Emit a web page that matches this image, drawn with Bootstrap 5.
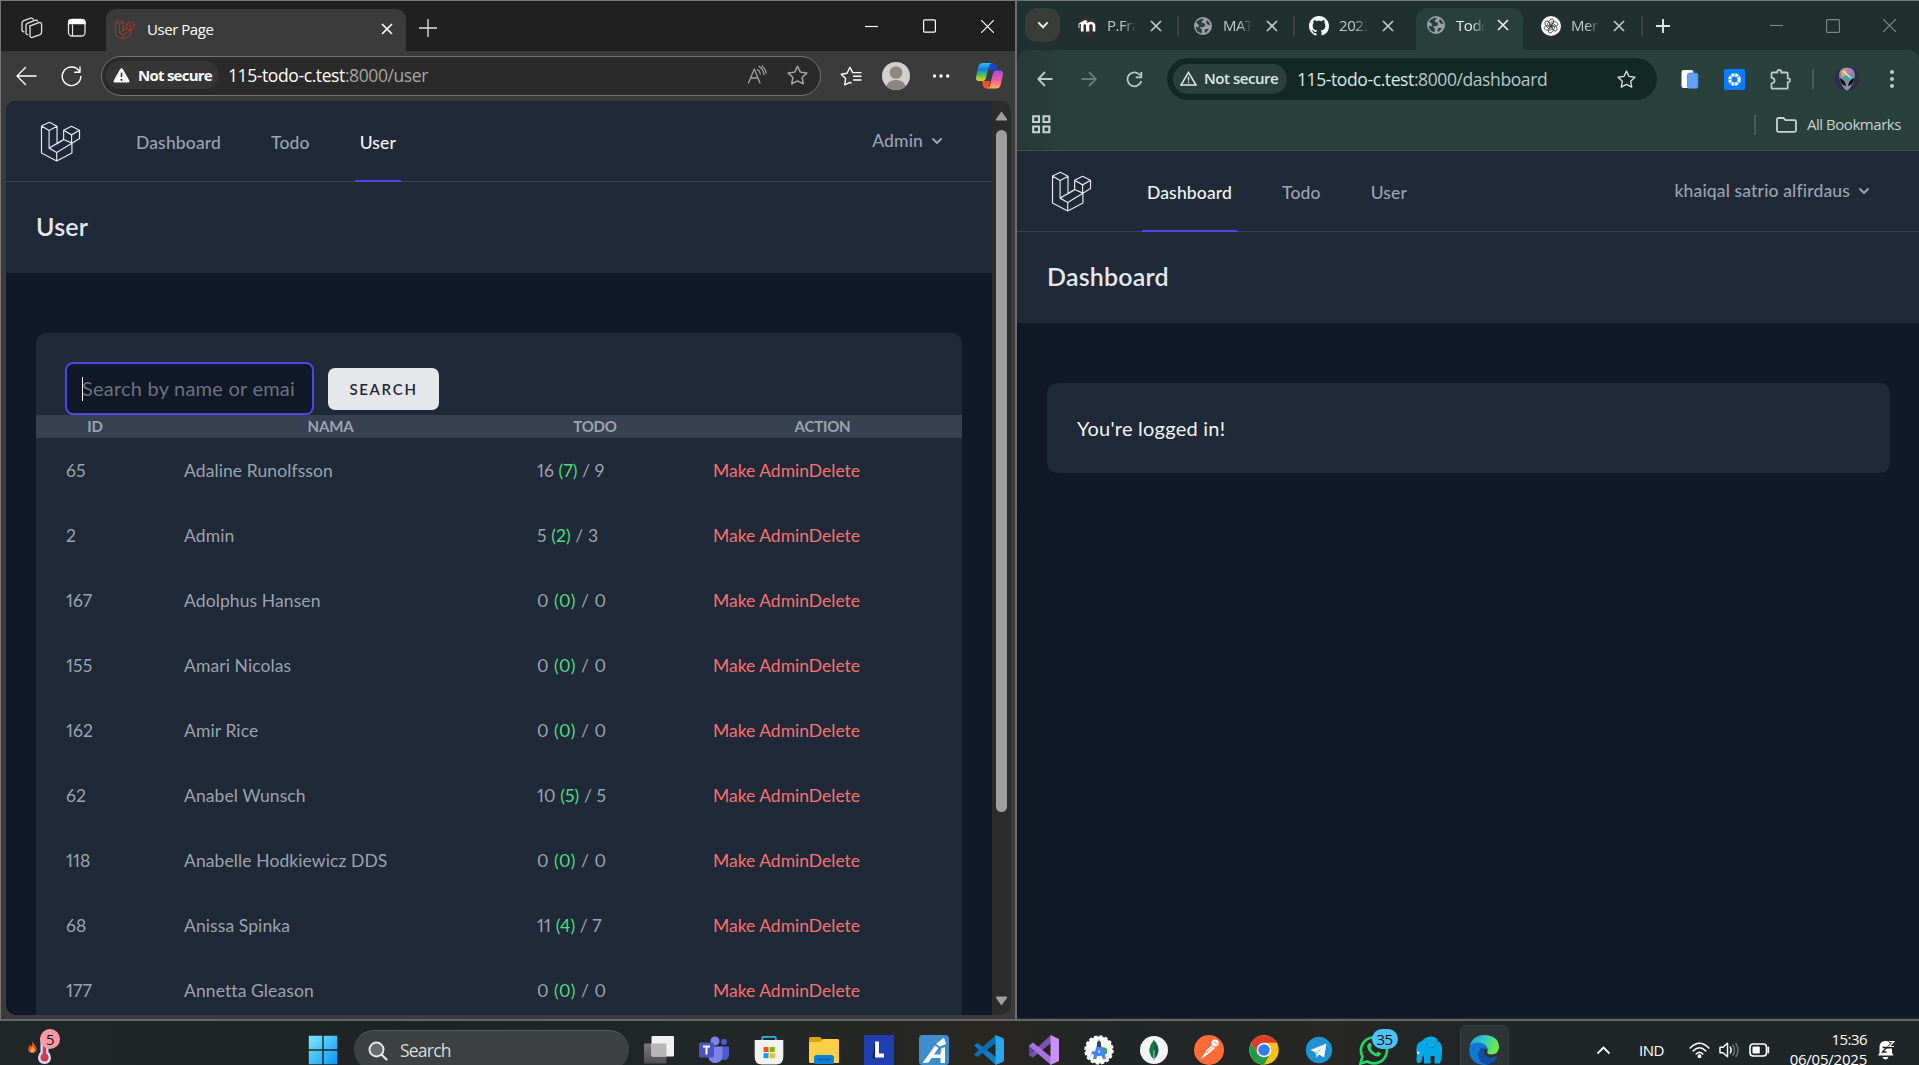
<!DOCTYPE html>
<html lang="en" data-bs-theme="dark">
<head>
<meta charset="utf-8">
<meta name="viewport" content="width=device-width, initial-scale=1">
<title>Desktop - User Page and Dashboard</title>
<link href="https://cdn.jsdelivr.net/npm/bootstrap@5.3.0/dist/css/bootstrap.min.css" rel="stylesheet">
<style>
  body { width: 1919px; height: 1065px; overflow: hidden; background: #202527; font-family: "Open Sans", "Noto Sans", sans-serif; font-size: 15px; letter-spacing: -.03em; line-height: 1.5; color: #fff; }
  svg { display: block; flex: none; }
  .desk { height: 1021px; }
  .ln { fill: none; stroke: currentColor; stroke-linecap: round; stroke-linejoin: round; }
  .slot { display: flex; align-items: center; justify-content: center; flex: none; }

  /* left window */
  .edge-win { width: 1017px; border: 1px solid #767676; border-right: 2px solid #6e6e6e; border-bottom: 2px solid #666; background: #3b3b3b; }
  .edge-tabs { height: 50px; background: #202020; }
  .edge-tab { width: 300px; height: 42px; background: #3b3b3b; border-radius: 10px 10px 0 0; margin-left: 19px; padding: 0 0 2px 9px; }
  .edge-bar { height: 50px; }
  .edge-url { width: 720px; height: 40px; border: 1px solid #747474; border-radius: 20px; background: #2a2a2a; margin-left: 19px; padding: 0 0 2px 4px; }
  .edge-chip { width: 113px; height: 28px; border-radius: 14px; background: #353535; padding-left: 7px; font-weight: 700; letter-spacing: -.05em; }
  .addr { font-size: 17.5px; letter-spacing: -.023em; }
  .edge-view { margin: 0 4px 4px 5px; height: 914px; border-radius: 10px; overflow: hidden; background: #2c2c2c; }
  .avatar-ring { width: 28px; height: 28px; border-radius: 50%; background: #d2d0ce; overflow: hidden; }
  .scroll-rail { width: 19px; padding: 10px 0 9px; }
  .scroll-thumb { width: 11px; height: 682px; border-radius: 6px; background: #9f9f9f; margin-top: 9px; }

  /* application */
  .app { font-family: Lato, sans-serif; letter-spacing: 0; background: #111827; overflow: hidden; }
  .app-nav { height: 81px; background: #1f2937; border-bottom: 1px solid #374151; padding: 0 45px 0 34px; font-size: 17.5px; font-weight: 500; color: #9ca3af; letter-spacing: .15px; }
  .app-links { gap: 40px; margin-left: 50px; margin-bottom: -1px; }
  .app-link { display: flex; align-items: center; padding: 4px 5px 0; border-bottom: 2px solid transparent; line-height: 25px; }
  .app-link.on { color: #f3f4f6; border-color: #4f46e5; }
  .app-head { height: 91px; background: #1f2937; padding: 0 0 1px 30px; font-size: 25px; font-weight: 600; color: #e5e7eb; letter-spacing: .2px; }
  .panel-box { background: #1f2937; border-radius: 10px; margin: 60px 30px 0; }
  .find { padding: 29px 0 0 29px; gap: 14px; height: 82px; }
  .find-input { width: 249px; height: 53px; border: 2px solid #4f46e5; border-radius: 8px; background: #111827; padding: 0 18px 2px 15px; font-size: 20px; letter-spacing: .22px; color: #d1d5db; outline: 0; }
  .find-input::placeholder { color: #6b7280; opacity: 1; }
  .caret-bar { position: absolute; left: 17px; top: 15px; width: 1px; height: 24px; background: #fff; }
  .find-btn { width: 111px; height: 42px; margin-top: 6px; border: 0; border-radius: 7px; background: #e5e7eb; color: #1f2937; font-size: 15px; font-weight: 600; letter-spacing: 1.7px; padding: 0; }
  .users { width: 926px; table-layout: fixed; color: #9ca3af; font-size: 17.5px; font-weight: 400; letter-spacing: .1px; font-variant-numeric: proportional-nums; }
  .users th { height: 23px; line-height: 23px; background: #374151; text-align: center; font-size: 15px; font-weight: 700; letter-spacing: -.2px; padding: 0; }
  .users td { height: 65px; padding: 0 0 0 30px; line-height: 25px; }
  .users .zeros { letter-spacing: .5px; }
  .users .acts { color: #f87171; letter-spacing: 0; }
  .done { color: #4ade80; }

  /* right window */
  .chrome-win { width: 902px; border-top: 1px solid #767676; border-bottom: 2px solid #666; background: #1f302e; font-size: 15px; }
  .chrome-tabs { height: 49px; padding-left: 8px; padding-top: 7px; color: #b9cdc8; }
  .tab-menu { width: 35px; height: 34px; border-radius: 12px; background: #383d3a; }
  .ctab { width: 116px; height: 35px; padding-left: 14px; flex: none; }
  .ctab.on { width: 107px; height: 42px; padding: 0 0 8px 10px; margin-left: 5px; margin-right: 4px; background: #29403c; border-radius: 12px 12px 0 0; color: #e6efec; }
  .ctab-name { width: 29px; margin-left: 10px; overflow: hidden; white-space: nowrap; -webkit-mask-image: linear-gradient(90deg, #000 55%, transparent); mask-image: linear-gradient(90deg, #000 55%, transparent); }
  .tab-sep { width: 2px; height: 20px; background: #3d4441; flex: none; }
  .chrome-bar { height: 100px; background: linear-gradient(90deg, #263936, #29403c 50px); border-radius: 10px 10px 0 0; color: #b9cdc8; }
  .omni { width: 490px; height: 42px; border-radius: 21px; background: #122825; margin-left: 24px; padding-left: 6px; }
  .omni-chip { width: 114px; height: 30px; border-radius: 15px; background: #29403c; padding: 0 0 2px 7px; font-weight: 600; color: #dbe9e5; }
  .chrome-view { height: 868px; border-top: 1px solid #3f504b; }
  .shade { background: linear-gradient(90deg, #101725, #111827 45px); }

  /* taskbar */
  .taskbar { height: 44px; overflow: hidden; background: linear-gradient(90deg, #212627 0, #1e2426 420px, #222726 760px, #292722 990px, #202527 1130px, #272724 1330px, #202527 1480px, #202527 100%); }
  .task-row { height: 58px; }
  .find-pill { width: 275px; height: 40px; border-radius: 20px; background: #3d4142; border-top: 1px solid #585c5d; padding-left: 14px; font-size: 17.5px; color: #d9dbdb; margin-left: 17px; }
  .app-slot { width: 55px; height: 58px; }
  .app-slot.on { width: 49px; margin: 4px 3px 0; height: 54px; align-items: flex-start; padding-top: 9px; background: #2e3435; border: 1px solid #363c3d; border-radius: 6px 6px 0 0; }
  .note { position: absolute; display: flex; align-items: center; justify-content: center; height: 20px; border-radius: 10px; color: #111; font-size: 15px; letter-spacing: -.04em; }
</style>
<script src="https://cdn.jsdelivr.net/npm/bootstrap@5.3.0/dist/js/bootstrap.bundle.min.js"></script>
</head>
<body>

<svg width="0" height="0" class="position-absolute">
  <defs>
    <symbol id="laravel" viewBox="120 362 123 124"><path d="M124 377 148 366 171 378V431L191 419V390L215 378 239 390V415L216 429V459L170 483 124 459ZM124 377 147 391 171 378M147 391V444L191 418 216 429 170 457 147 444M170 457V483M191 390 215 404 239 390M215 404V429" fill="none" stroke="currentColor" stroke-width="3.6" stroke-linejoin="round"/></symbol>
    <symbol id="x" viewBox="0 0 12 12"><path d="M1 1 11 11M11 1 1 11" fill="none" stroke="currentColor" stroke-width="1.7"/></symbol>
    <symbol id="chev" viewBox="0 0 20 20"><path fill="currentColor" fill-rule="evenodd" d="M5.293 7.293a1 1 0 011.414 0L10 10.586l3.293-3.293a1 1 0 111.414 1.414l-4 4a1 1 0 01-1.414 0l-4-4a1 1 0 010-1.414z"/></symbol>
    <symbol id="star" viewBox="0 0 20 20"><path d="M10 1.2 12.7 6.8 18.9 7.6 14.4 11.9 15.5 18 10 15.1 4.5 18 5.6 11.9 1.1 7.6 7.3 6.8Z" fill="none" stroke="currentColor" stroke-width="1.4" stroke-linejoin="round"/></symbol>
    <symbol id="globe" viewBox="0 0 20 20"><circle cx="10" cy="10" r="9" fill="#9aa0a6"/><path d="M3 6.5C5 3.8 8 2.6 11 2.9L8.8 5.2 9 7 11.2 7.2 12.5 9.3 10.2 11.3H6.5L9 13.7 8.6 17.3C5.3 16.6 3 14.4 2.6 11L5.5 11.2 6 9ZM14 4.2C15.900 5.500 17.100 7.400 17.300 9.300L14.500 8.500 13 6.300ZM12.500 13H15.800C14.900 14.800 13.600 16.200 12 16.900L11.400 15Z" fill="#29403c"/></symbol>
  </defs>
</svg>

<div class="desk d-flex">

  <!-- Edge window -->
  <section class="edge-win d-flex flex-column">
    <div class="edge-tabs d-flex align-items-end">
      <div class="slot" style="height:46px"><svg width="22" height="22" viewBox="0 0 22 22" class="ln" stroke-width="1.3" style="margin-left:20px;color:#e4e4e4"><path d="M8.6 9.2 17.7 5.6Q20.6 5 20.6 7.6V15.4Q20.4 17 19 17.6L11.5 20.4Q9.3 21 9 18.8V10.7ZM6.800 17.600Q5 17.700 5 15.700V8.500Q5 7 6.300 6.400L14.500 3.200Q16 2.800 16.600 4M3 14.800Q1 14.700 1 12.700V5.900Q1 4.500 2.300 3.900L9.500 1.200Q11.400.800 12.200 2.200"/></svg>
      <svg width="20" height="20" viewBox="0 0 20 20" style="margin-left:24px"><rect x="1.5" y="1.5" width="16.5" height="16.5" rx="3.5" fill="none" stroke="#e6e6e6" stroke-width="1.3"/><path d="M1 6.3V4Q1 1 4 1H15.6Q18.6 1 18.6 4V6.3Z" fill="#fff"/><path d="M5.5 6.5V18" stroke="#e6e6e6" stroke-width="1.2"/></svg></div>
      <div class="edge-tab d-flex align-items-center">
        <svg width="20" height="21" style="color:#e0352b"><use href="#laravel"/></svg>
        <span style="margin-left:12px">User Page</span>
        <svg width="12" height="12" class="ms-auto" style="margin-right:13px"><use href="#x"/></svg>
      </div>
      <div class="slot" style="height:46px;margin-left:13px"><svg width="18" height="18" viewBox="0 0 18 18"><path d="M9 0V18M0 9H18" stroke="#e4e4e4" stroke-width="1.3"/></svg></div>
      <div class="d-flex align-items-center ms-auto" style="height:50px;gap:45px;padding-right:21px">
        <svg width="13" height="13"><path d="M0 6.5H13" stroke="#fff" stroke-width="1.2"/></svg>
        <svg width="13" height="14"><rect x=".6" y=".8" width="11.8" height="12.3" rx="1" fill="none" stroke="#fff" stroke-width="1.2"/></svg>
        <svg width="13" height="13" viewBox="0 0 13 13"><path d="M0 0 13 13M13 0 0 13" stroke="#fff" stroke-width="1.2"/></svg>
      </div>
    </div>
    <div class="edge-bar d-flex align-items-center">
      <svg width="21" height="20" viewBox="0 0 21 20" class="ln" stroke-width="1.4" style="margin-left:15px"><path d="M20 10H1M9.5 1.5 1 10 9.5 18.5"/></svg>
      <svg width="21" height="21" viewBox="0 0 21 21" class="ln" stroke-width="1.4" style="margin-left:24px"><path d="M18.3 5.2A9.3 9.3 0 1 0 19.8 10.5M19 1V6.2H13.7"/></svg>
      <div class="edge-url d-flex align-items-center">
        <span class="edge-chip d-flex align-items-center"><svg width="17" height="15" viewBox="0 0 17 15" class="me-2"><path d="M7.2 1Q8.5-.6 9.8 1L16.3 12.6Q16.9 14.5 15 14.6H2Q.1 14.5.7 12.6Z" fill="#fff"/><path d="M8.5 4.7V9" stroke="#333" stroke-width="1.6"/><circle cx="8.5" cy="11.8" r="1.1" fill="#333"/></svg>Not secure</span>
        <span class="addr" style="margin-left:9px">115-todo-c.test<span style="color:#a5a5a5">:8000/user</span></span>
        <svg width="21" height="20" viewBox="0 0 21 20" class="ln ms-auto" stroke-width="1.3" style="color:#a0a0a0"><path d="M1.5 18 7.3 4 13 18M3.5 13H11M10.5 4.6Q13 6 13.3 9M12 1.400Q16.600 4 17 9.500M15 1Q18.500 4 19.300 8" /></svg>
        <svg width="21" height="21" style="margin:0 12px 0 19px;color:#a8a8a8"><use href="#star"/></svg>
      </div>
      <svg width="22" height="20" viewBox="0 0 22 20" class="ln" stroke-width="1.4" style="margin-left:19px"><path d="M11 17 9.8 16.4 4.8 18.9 5.6 12.6 1.2 8.3 7 7.2 10 1.3 12.6 6.4M12.8 6.6H21M13.5 10.3H21M13.5 14H21"/></svg>
      <span class="avatar-ring" style="margin-left:20px"><svg width="28" height="28"><circle cx="14" cy="10.5" r="6.3" fill="#8b8783"/><ellipse cx="14" cy="26" rx="10" ry="8" fill="#8b8783"/></svg></span>
      <svg width="18" height="6" style="margin-left:22px"><g fill="#fff"><circle cx="2.5" cy="3" r="1.7"/><circle cx="9" cy="3" r="1.7"/><circle cx="15.7" cy="3" r="1.7"/></g></svg>
      <svg width="29" height="28" viewBox="0 0 29 28" style="margin-left:25px">
        <defs><linearGradient id="cpa" x1="0" y1="0" x2="0" y2="1"><stop offset="0" stop-color="#2bc2f5"/><stop offset=".35" stop-color="#1b78e0"/><stop offset=".65" stop-color="#3fbf6d"/><stop offset="1" stop-color="#f6d50d"/></linearGradient><linearGradient id="cpb" x1="0" y1="0" x2="0" y2="1"><stop offset="0" stop-color="#9a4ff0"/><stop offset=".5" stop-color="#f2569a"/><stop offset="1" stop-color="#ffb45e"/></linearGradient></defs>
        <path d="M14 1H18.5Q20.6 1 21.4 3.6L22.6 8H14Z" fill="#1c46c9"/><path d="M7 19H15L13.6 26.6H11Q8.6 26.4 8 24Z" fill="#f4542b"/>
        <path d="M7.5 1H16.6Q14.8 1.6 14 4.6L10.8 16.4Q10 19 7.4 19H3.6Q.3 18.6 1 15L3.4 4.6Q4.6 1 7.5 1Z" fill="url(#cpa)"/>
        <path d="M21.2 8.6H25.4Q28.7 9 28 12.5L25.6 23Q24.4 26.6 21.5 26.6H12.4Q14.4 26 15 23L18 11.4Q18.8 8.6 21.2 8.6Z" fill="url(#cpb)"/>
      </svg>
    </div>
    <div class="edge-view d-flex">
      <main class="app flex-grow-1">
        <nav class="app-nav d-flex">
          <svg width="41" height="41" class="align-self-center" style="color:#e5e7eb"><use href="#laravel"/></svg>
          <div class="app-links d-flex">
            <span class="app-link">Dashboard</span><span class="app-link">Todo</span><span class="app-link on">User</span>
          </div>
          <div class="d-flex align-items-center ms-auto gap-1"><span>Admin</span><svg width="20" height="20"><use href="#chev"/></svg></div>
        </nav>
        <header class="app-head d-flex align-items-center">User</header>
        <div class="panel-box">
          <form class="find d-flex">
            <div class="position-relative"><input class="find-input" type="text" placeholder="Search by name or email"><span class="caret-bar"></span></div>
            <button class="find-btn" type="button">SEARCH</button>
          </form>
          <table class="users">
            <colgroup><col style="width:118px"><col style="width:353px"><col style="width:176px"><col style="width:279px"></colgroup>
            <thead><tr><th>ID</th><th>NAMA</th><th>TODO</th><th>ACTION</th></tr></thead>
            <tbody>
              <tr><td>65</td><td>Adaline Runolfsson</td><td>16 <span class="done">(7)</span> / 9</td><td class="acts">Make AdminDelete</td></tr>
              <tr><td>2</td><td>Admin</td><td>5 <span class="done">(2)</span> / 3</td><td class="acts">Make AdminDelete</td></tr>
              <tr><td>167</td><td>Adolphus Hansen</td><td class="zeros">0 <span class="done">(0)</span> / 0</td><td class="acts">Make AdminDelete</td></tr>
              <tr><td>155</td><td>Amari Nicolas</td><td class="zeros">0 <span class="done">(0)</span> / 0</td><td class="acts">Make AdminDelete</td></tr>
              <tr><td>162</td><td>Amir Rice</td><td class="zeros">0 <span class="done">(0)</span> / 0</td><td class="acts">Make AdminDelete</td></tr>
              <tr><td>62</td><td>Anabel Wunsch</td><td>10 <span class="done">(5)</span> / 5</td><td class="acts">Make AdminDelete</td></tr>
              <tr><td>118</td><td>Anabelle Hodkiewicz DDS</td><td class="zeros">0 <span class="done">(0)</span> / 0</td><td class="acts">Make AdminDelete</td></tr>
              <tr><td>68</td><td>Anissa Spinka</td><td>11 <span class="done">(4)</span> / 7</td><td class="acts">Make AdminDelete</td></tr>
              <tr><td>177</td><td>Annetta Gleason</td><td class="zeros">0 <span class="done">(0)</span> / 0</td><td class="acts">Make AdminDelete</td></tr>
            </tbody>
          </table>
        </div>
      </main>
      <div class="scroll-rail d-flex flex-column align-items-center">
        <svg width="13" height="10"><path d="M6.5.5 12 8Q12.6 9.6 11 9.6H2Q.4 9.6 1 8Z" fill="#9f9f9f"/></svg>
        <div class="scroll-thumb"></div>
        <svg width="13" height="10" class="mt-auto"><path d="M6.5 9.5 12 2Q12.6.4 11 .4H2Q.4.4 1 2Z" fill="#9f9f9f"/></svg>
      </div>
    </div>
  </section>

  <!-- Chrome window -->
  <section class="chrome-win d-flex flex-column">
    <div class="chrome-tabs d-flex align-items-start">
      <span class="tab-menu slot"><svg width="12" height="8" viewBox="0 0 12 8"><path d="M1.3 1.4 6 6.2 10.7 1.4" fill="none" stroke="#e6efec" stroke-width="2"/></svg></span>
      <div class="ctab d-flex align-items-center" style="margin-left:3px">
        <svg width="20" height="20"><circle cx="10" cy="10" r="9.5" fill="#332e30"/><path d="M5.2 15.5V9.5Q5.2 7 7.6 7T10.3 9.5V15.5M11 15.5V9.5Q11 7 13.8 7T17 9.5V15.5" fill="none" stroke="#fff" stroke-width="2.6"/><path d="M1.5 7.5 8 4 11 5.2 5 8.2Z" fill="#fff"/><path d="M2 7.5V12" stroke="#ddd"/></svg>
        <span class="ctab-name">P.Fra</span><svg width="12" height="12" style="margin-left:14px"><use href="#x"/></svg>
        <span class="tab-sep ms-auto"></span>
      </div>
      <div class="ctab d-flex align-items-center">
        <svg width="20" height="20"><use href="#globe"/></svg>
        <span class="ctab-name">MAT</span><svg width="12" height="12" style="margin-left:14px"><use href="#x"/></svg>
        <span class="tab-sep ms-auto"></span>
      </div>
      <div class="ctab d-flex align-items-center">
        <svg width="20" height="20" viewBox="0 0 16 16"><path fill="#fff" d="M8 0C3.58 0 0 3.58 0 8c0 3.54 2.29 6.53 5.47 7.59.4.07.55-.17.55-.38 0-.19-.01-.82-.01-1.49-2.01.37-2.53-.49-2.69-.94-.09-.23-.48-.94-.82-1.13-.28-.15-.68-.52-.01-.53.63-.01 1.08.58 1.23.82.72 1.21 1.87.87 2.33.66.07-.52.28-.87.51-1.07-1.78-.2-3.64-.89-3.64-3.95 0-.87.31-1.59.82-2.15-.08-.2-.36-1.02.08-2.12 0 0 .67-.21 2.2.82.64-.18 1.32-.27 2-.27s1.36.09 2 .27c1.53-1.04 2.2-.82 2.2-.82.44 1.1.16 1.92.08 2.12.51.56.82 1.27.82 2.15 0 3.07-1.87 3.75-3.65 3.95.29.25.54.73.54 1.48 0 1.07-.01 1.93-.01 2.2 0 .21.15.46.55.38A8.01 8.01 0 0 0 16 8c0-4.42-3.58-8-8-8"/></svg>
        <span class="ctab-name">2022</span><svg width="12" height="12" style="margin-left:14px"><use href="#x"/></svg>
      </div>
      <div class="ctab on d-flex align-items-center">
        <svg width="20" height="20"><use href="#globe"/></svg>
        <span class="ctab-name">Todo</span><svg width="12" height="12" style="margin-left:12px"><use href="#x"/></svg>
      </div>
      <div class="ctab d-flex align-items-center">
        <svg width="20" height="20" viewBox="-10 -10 20 20"><circle r="10" fill="#fff"/><g fill="none" stroke="#333" stroke-width=".75"><ellipse cx="2.600" cy="-1.900" rx="4.200" ry="2.300"/><ellipse cx="2.600" cy="-1.900" rx="4.200" ry="2.300" transform="rotate(60)"/><ellipse cx="2.600" cy="-1.900" rx="4.200" ry="2.300" transform="rotate(120)"/><ellipse cx="2.600" cy="-1.900" rx="4.200" ry="2.300" transform="rotate(180)"/><ellipse cx="2.600" cy="-1.900" rx="4.200" ry="2.300" transform="rotate(240)"/><ellipse cx="2.600" cy="-1.900" rx="4.200" ry="2.300" transform="rotate(300)"/></g></svg>
        <span class="ctab-name">Mer</span><svg width="12" height="12" style="margin-left:13px"><use href="#x"/></svg>
        <span class="tab-sep ms-auto"></span>
      </div>
      <div class="d-flex align-items-center" style="height:35px;margin-left:13px"><svg width="14" height="14"><path d="M7 0V14M0 7H14" stroke="#dbe9e5" stroke-width="1.9"/></svg></div>
      <div class="d-flex align-items-center ms-auto" style="height:35px;gap:43px;padding-right:23px;color:#7f8987">
        <svg width="13" height="13"><path d="M0 6.5H13" stroke="currentColor" stroke-width="1.1"/></svg>
        <svg width="14" height="14"><rect x=".6" y=".6" width="12.8" height="12.8" rx="1" fill="none" stroke="currentColor" stroke-width="1.1"/></svg>
        <svg width="13" height="13" viewBox="0 0 13 13"><path d="M0 0 13 13M13 0 0 13" stroke="currentColor" stroke-width="1.2"/></svg>
      </div>
    </div>
    <div class="chrome-bar">
      <div class="d-flex align-items-center" style="height:58px">
        <svg width="16" height="16" viewBox="0 0 16 16" style="margin-left:20px"><path d="M15.5 8H1.5M8 1 1.2 8 8 15" fill="none" stroke="currentColor" stroke-width="1.8"/></svg>
        <svg width="16" height="16" viewBox="0 0 16 16" style="margin-left:28px;color:#657b76"><path d="M.5 8H14.5M8 1 14.8 8 8 15" fill="none" stroke="currentColor" stroke-width="1.8"/></svg>
        <svg width="17" height="17" viewBox="0 0 17 17" style="margin-left:29px"><path d="M14.2 4.2A7 7 0 1 0 15.3 10M15.3 1V6.3H9.8" fill="none" stroke="currentColor" stroke-width="1.8"/></svg>
        <div class="omni d-flex align-items-center">
          <span class="omni-chip d-flex align-items-center"><svg width="17" height="15" viewBox="0 0 17 15" style="margin-right:7px"><path d="M8.5 1.4 16 14.1H1Z" fill="none" stroke="currentColor" stroke-width="1.5"/><path d="M8.5 5.7V9.7M8.5 10.7V12.3" stroke="currentColor" stroke-width="1.4"/></svg>Not secure</span>
          <span class="addr" style="margin-left:10px;color:#dbe9e5">115-todo-c.test<span style="color:#b5cac5">:8000/dashboard</span></span>
          <svg width="19" height="19" class="ms-auto" style="margin-right:21px;color:#d5e3df"><use href="#star"/></svg>
        </div>
        <svg width="18" height="20" style="margin-left:24px"><rect x=".5" y="1" width="12" height="18" rx="2" fill="#fff"/><rect x="6.5" y="4" width="10.5" height="15.5" rx="2" fill="#62a0fb" stroke="#3f78d8" stroke-width=".7"/></svg>
        <svg width="21" height="21" viewBox="0 0 21 21" style="margin-left:25px"><rect width="21" height="21" rx="1.5" fill="#0a7cff"/><circle cx="10.5" cy="10.5" r="4.7" fill="none" stroke="#fff" stroke-width="3.3" stroke-dasharray="3 .7"/></svg>
        <svg width="21" height="21" viewBox="0 0 21 21" style="margin-left:25px"><path d="M2.5 3.5H7.2Q7 1 9.2 1T11.4 3.5H16.8Q17.7 3.5 17.7 4.5V9.3Q20 9.2 20 11.3T17.7 13.4V18.7Q17.7 19.7 16.8 19.7H2.5Q1.5 19.7 1.5 18.7V14.6Q4.6 14 4.6 11.6T1.5 8.6V4.5Q1.5 3.5 2.5 3.5Z" fill="none" stroke="#b9cdc8" stroke-width="1.8"/></svg>
        <span class="tab-sep" style="margin-left:21px;background:#465b57"></span>
        <svg width="26" height="26" viewBox="0 0 26 26" style="margin-left:20px"><circle cx="13" cy="13" r="12.300" fill="#2a3046"/><path d="M13 1.500C6.500 1.500 4.500 6 5.300 11.500 6 16.500 10.500 24.500 13 24.500S20 16.500 20.700 11.500C21.500 6 19.500 1.500 13 1.500Z" fill="#8f8ba6"/><path d="M7 5.500 12 2 14 8 8 12Z" fill="#c9ad6b"/><path d="M13 2 19 5 16 10 12.500 7Z" fill="#c874bd"/><path d="M8.500 11 20 7 17 13 13 17Z" fill="#3fa39f"/><path d="M9 5 17 12" stroke="#e7e3f2" stroke-width="1.200"/><path d="M5.500 12Q11.500 14 12 20 7 19.500 5.500 12ZM20.500 12Q14.500 14 14 20 19 19.500 20.500 12Z" fill="#0b0b12"/></svg>
        <svg width="6" height="20" style="margin-left:29px"><g fill="#b9cdc8"><circle cx="3" cy="3" r="2"/><circle cx="3" cy="10" r="2"/><circle cx="3" cy="17" r="2"/></g></svg>
      </div>
      <div class="d-flex align-items-center" style="height:34px;padding:0 18px 1px 15px;color:#c7d3cf">
        <svg width="19" height="19" viewBox="0 0 19 19"><path d="M1.2 1.2H7V7H1.2ZM11.5 1.2H17.3V7H11.5ZM1.2 11.5H7V17.3H1.2ZM11.5 11.5H17.3V17.3H11.5Z" fill="none" stroke="currentColor" stroke-width="2.1"/></svg>
        <span class="tab-sep ms-auto" style="background:#465b57"></span>
        <svg width="21" height="16" viewBox="0 0 21 16" style="margin:0 10px 0 20px"><path d="M2.5 1H7.5L9.5 3.2H18.5Q20 3.2 20 4.7V13.3Q20 14.8 18.5 14.8H2.5Q1 14.8 1 13.3V2.5Q1 1 2.5 1Z" fill="none" stroke="currentColor" stroke-width="1.8"/></svg>
        <span>All Bookmarks</span>
      </div>
    </div>
    <main class="app shade chrome-view">
      <nav class="app-nav d-flex">
        <svg width="41" height="41" class="align-self-center" style="color:#e5e7eb"><use href="#laravel"/></svg>
        <div class="app-links d-flex">
          <span class="app-link on">Dashboard</span><span class="app-link">Todo</span><span class="app-link">User</span>
        </div>
        <div class="d-flex align-items-center ms-auto gap-1"><span>khaiqal satrio alfirdaus</span><svg width="20" height="20"><use href="#chev"/></svg></div>
      </nav>
      <header class="app-head d-flex align-items-center">Dashboard</header>
      <div class="panel-box d-flex align-items-center" style="height:90px;padding:0 0 1px 30px;margin-right:29px;font-size:20px;letter-spacing:.24px;color:#f3f4f6">You're logged in!</div>
    </main>
  </section>
</div>

<!-- Taskbar -->
<footer class="taskbar">
  <div class="task-row d-flex align-items-center">
    <div class="position-relative" style="width:307px;height:58px;flex:none">
      <svg width="60" height="44" viewBox="0 0 60 44"><path d="M32.5 20C33 23 37 25 36.5 29Q36 32 32.3 32 28.5 32 28.2 28.5 28 26 30 24 30.5 25.5 31.3 25.3 32.8 23 32.5 20Z" fill="#e8502a"/><path d="M32.5 25.5Q35 28 34.5 30 34 31.5 32.3 31.5 30.4 31.3 30.5 29.5 31 28 32.5 25.5Z" fill="#ffb53b"/><path d="M40.5 18Q40.5 14 44.5 14T48.5 18V31Q51 33 51 36.5 51 43 44.5 43T38 36.5Q38 33 40.5 31Z" fill="#cfe0f5"/><path d="M44.5 20V34" stroke="#d9364f" stroke-width="3.5"/><circle cx="44.5" cy="36.5" r="4" fill="#d9364f"/></svg>
      <span class="note" style="left:40px;top:8px;width:20px;background:#ff99a4">5</span>
    </div>
    <svg width="30" height="30" viewBox="0 0 30 30" style="margin-left:1px"><defs><linearGradient id="win" x1="0" y1="0" x2="1" y2="1"><stop offset="0" stop-color="#7beaff"/><stop offset="1" stop-color="#0a94f5"/></linearGradient></defs><path d="M.8.8H14.3V14.3H.8ZM15.7.8H29.2V14.3H15.7ZM.8 15.7H14.3V29.2H.8ZM15.7 15.7H29.2V29.2H15.7Z" fill="url(#win)"/></svg>
    <div class="find-pill d-flex align-items-center" style="margin-left:16px"><svg width="20" height="20" viewBox="0 0 20 20"><circle cx="8.5" cy="8.5" r="7" fill="#666b6c" stroke="#e8e8e8" stroke-width="1.9"/><path d="M13.7 13.7 18.5 18.5" stroke="#e8e8e8" stroke-width="2.2" stroke-linecap="round"/></svg><span style="margin-left:12px;letter-spacing:-.045em">Search</span></div>
    <div class="d-flex" style="margin-left:2.5px">
      <span class="slot app-slot"><svg width="30" height="30" viewBox="0 0 30 30"><defs><linearGradient id="tva" x1="0" y1="0" x2="0" y2="1"><stop offset="0" stop-color="#7b7b7b"/><stop offset="1" stop-color="#4f4f4f"/></linearGradient></defs><rect x="0" y="8.5" width="22.5" height="20" rx="1" fill="url(#tva)"/><rect x="7.5" y="1" width="22.5" height="20.5" rx="1" fill="#f0f0f0"/><path d="M7.5 8.5H22.5V21.5H8.5Q7.5 21.5 7.5 20.5Z" fill="#b7b7b7"/></svg></span>
      <span class="slot app-slot"><svg width="30" height="30" viewBox="0 0 30 30"><circle cx="25" cy="7" r="3" fill="#5059c9"/><path d="M21 11.5H30V20Q30 25 25 25 22 25 21 23Z" fill="#5059c9"/><circle cx="16" cy="6" r="4.5" fill="#7b83eb"/><path d="M9 11.5H23.5V20Q23.5 28 16 28 10 28 9 21Z" fill="#7b83eb"/><rect x="0" y="7.5" width="15" height="15" rx="1.5" fill="#4b53bc"/><path d="M4 11.5H11M7.5 11.5V19.5" stroke="#fff" stroke-width="2"/></svg></span>
      <span class="slot app-slot"><svg width="30" height="30" viewBox="0 0 30 30"><path d="M8.2 6V2.8Q8.2 1.8 9.2 1.8H20.8Q21.8 1.8 21.8 2.8V6" fill="none" stroke="#25b7ee" stroke-width="1.7"/><path d="M.7 5H29.3V22Q29.3 29.5 22 29.5H8Q.7 29.5.7 22Z" fill="#f2f2f2"/><path d="M9.500 12H14.500V17H9.500Z" fill="#f25022"/><path d="M15.700 12H20.700V17H15.700Z" fill="#7fba00"/><path d="M9.500 18.200H14.500V23.200H9.500Z" fill="#00a4ef"/><path d="M15.700 18.200H20.700V23.200H15.700Z" fill="#ffb900"/></svg></span>
      <span class="slot app-slot"><svg width="30" height="30" viewBox="0 0 30 30"><path d="M0 3.500Q0 2 1.500 2H10Q12 2 13 4L14 7H0Z" fill="#e0a010"/><path d="M0 7H11L14 4H28.500Q30 4 30 5.500V28H1.500Q0 28 0 26.500Z" fill="#ffcf48"/><path d="M5 29V22.500Q5 20 7.500 20H22.500Q25 20 25 22.500V29Z" fill="#0f7fd6"/><path d="M9 24.500H21" stroke="#0a5ca8" stroke-width="1.500"/></svg></span>
      <span class="slot app-slot"><svg width="30" height="30" viewBox="0 0 30 30"><rect width="30" height="30" fill="#1f3fae"/><path d="M11 6 8.500 23.500 11 24Z" fill="#0b2250"/><path d="M13 6.500V20.500H20" fill="none" stroke="#fff" stroke-width="3.800"/></svg></span>
      <span class="slot app-slot"><svg width="30" height="30" viewBox="0 0 30 30"><rect width="30" height="30" rx="3.500" fill="#3d8ccb"/><path d="M17 9 25 2.500 27 9 21 11.500Z" fill="#fff"/><path d="M16 10.500 19.500 13 9.500 27.500 3.500 28Z" fill="#fff"/><path d="M22 13.500 26 12V28H21.500V23H12L14 19.500H21.500Z" fill="#fff"/></svg></span>
      <span class="slot app-slot"><svg width="30" height="30" viewBox="0 0 30 30"><path d="M22 30 0 10.500 2.500 8.500Q3.500 8 4.500 8.800L22 22Z" fill="#1279c4"/><path d="M22 0 0 19.500 2.500 21.500Q3.500 22 4.500 21.200L22 8Z" fill="#0c6cb4"/><path d="M21.500 0 28.800 3Q30 3.600 30 5V25Q30 26.400 28.800 27L21.500 30Z" fill="#29a6f2"/></svg></span>
      <span class="slot app-slot"><svg width="30" height="30" viewBox="0 0 30 30"><path d="M0 10 4 7.500V22.500L0 20Z" fill="#66418f"/><path d="M22 0V8L4 22.500 0 20Z" fill="#7d52ae"/><path d="M4 7.500 22 22 22 30 0 11Z" fill="#a673dd"/><path d="M21.500 0 30 4V26L21.500 30Z" fill="#c890f8"/></svg></span>
      <span class="slot app-slot"><svg width="30" height="30" viewBox="-15 -15 30 30"><circle r="13.500" fill="#fff"/><circle r="13.500" fill="none" stroke="#fff" stroke-width="2.400" stroke-dasharray="3.200 2.100"/><circle cx="4.500" cy="1" r="3.800" fill="#34a853"/><path d="M-4.500 9 0-6 5.500 9M-7 2Q0 7 7 2" fill="none" stroke="#4285f4" stroke-width="3.300"/><rect x="-2" y="-8.500" width="4" height="5.500" rx="1" fill="#444"/></svg></span>
      <span class="slot app-slot"><svg width="30" height="30" viewBox="-15 -15 30 30"><circle r="14" fill="#f4f4f4"/><path d="M0-10Q5-4 4.500 1 4 6 0 9-4 6-4.500 1-5-4 0-10Z" fill="#116149"/><path d="M0-10Q-5-4-4.500 1-4 6 0 9Z" fill="#13924f" opacity=".55"/><path d="M0 0V11" stroke="#b8c4c2"/></svg></span>
      <span class="slot app-slot"><svg width="30" height="30" viewBox="-15 -15 30 30"><circle r="15" fill="#ff6c37"/><circle cx="6" cy="-7" r="3.600" fill="#fff"/><path d="M-8 9-2-.500 3-5 6-2-1 4-8.500 9.500Z" fill="#fff"/><path d="M-3 3 5-4.500M5-8 8-6" stroke="#ff6c37" stroke-width=".8"/></svg></span>
      <span class="slot app-slot"><svg width="30" height="30" viewBox="-15 -15 30 30"><circle r="14.700" fill="#fbc116"/><path d="M-12.700-7.300A14.700 14.700 0 0 1 12.700-7.300L0-7.300-6.300 3.600Z" fill="#e33b2e"/><path d="M-12.700-7.300-6.300 3.600 6.300 3.600 0 14.700A14.700 14.700 0 0 1-12.700-7.300Z" fill="#229a4b"/><circle r="7.300" fill="#fff"/><circle r="5.800" fill="#2f7df0"/></svg></span>
      <span class="slot app-slot"><svg width="30" height="30" viewBox="-15 -15 30 30"><circle r="13.200" fill="#1d93d2"/><path d="M-8.500 0 7.500-6.500 5 7.500 0 4.500-2.500 7.500-3.500 2.500Z" fill="#fff"/><path d="M-3.500 2.500 4.500-3.500-1.500 3.500-2.500 7.500Z" fill="#b5d5e8"/></svg></span>
      <span class="slot app-slot position-relative"><svg width="30" height="30" viewBox="0 0 30 30"><path d="M1.500 28.500 3.500 21.500A13 13 0 1 1 8.300 26.500Z" fill="none" stroke="#25d366" stroke-width="2.700"/><path d="M10 8Q8 9 8 11.500 8.500 15.500 12 18.500 16 22 19.500 21.500 22 20.800 22 18.300L18.800 16.500 17 18.400Q13 16.500 11.400 13L12.800 11.200 11.500 8Z" fill="#25d366"/></svg><span class="note" style="left:25px;top:8px;width:26px;background:#4cc2ff">35</span></span>
      <span class="slot app-slot"><svg width="30" height="30" viewBox="0 0 30 30"><path d="M8 6Q12 1 18 1.500 23 2 24 6 29 9 28 17 28 23 26 28.500H20.500V21H16.500V28.500H10V20Q8 21 8 24 7 29 4 28 1.500 27 3 20 1.500 15 3 10 5 6.500 8 6Z" fill="#06a9e8"/><path d="M12 8Q14 15 20 12 24 9 23 5" fill="none" stroke="#0789c6" stroke-width="1"/><path d="M3.500 16 6 18 3 19.500Z" fill="#fff"/></svg></span>
      <span class="slot app-slot on"><svg width="30" height="30" viewBox="0 0 30 30"><defs><linearGradient id="eda" x1="0" y1="0" x2="1" y2=".3"><stop offset="0" stop-color="#1f9fe0"/><stop offset=".5" stop-color="#33c7c7"/><stop offset="1" stop-color="#6fe84a"/></linearGradient></defs><path d="M.500 11Q4 0 15 0 30 .500 30 12.500 29.500 19 22.500 19.500 17 19.500 18.500 16 19.500 13 16 10 8 5.500.500 11Z" fill="url(#eda)"/><path d="M0 15Q0 8 8.500 7.500 14 7.500 17 11 18.800 13 18 14.500 15.500 12.500 14.500 15 14 20 19 22.500 24 24 28.500 20.500 24.500 29.500 15 30 1 29 0 15Z" fill="#0f78d0"/><path d="M14.500 15Q14 20 19 22.500 24 24 28.500 20.500 25 28.500 18 29.500 9 28 9 19.500 9.500 13.500 14.500 12.500Z" fill="#0c4fa0"/></svg></span>
    </div>
    <div class="d-flex align-items-center ms-auto" style="padding-right:24px">
      <svg width="15" height="9" viewBox="0 0 15 9"><path d="M1.500 7.500 7.500 1.500 13.500 7.500" fill="none" stroke="#fff" stroke-width="1.800"/></svg>
      <span style="margin-left:28px;width:26px">IND</span>
      <svg width="21" height="17" viewBox="0 0 21 17" class="ln" stroke-width="1.600" style="margin-left:24px"><path d="M1.200 6Q10.500-3.500 19.800 6M4.200 9Q10.500 2.500 16.800 9M7.200 12Q10.500 8.700 13.800 12"/><circle cx="10.500" cy="14.200" r="1.200" fill="#fff"/></svg>
      <svg width="20" height="18" viewBox="0 0 20 18" class="ln" stroke-width="1.500" style="margin-left:9px"><path d="M1 6.300H4L8.500 2.200V15.800L4 11.700H1ZM11.300 6Q13 9 11.300 12"/><path d="M14 4Q17 9 14 14M17 2.300Q21 9 17 15.700" stroke="#6c7071"/></svg>
      <svg width="21" height="14" viewBox="0 0 21 14" style="margin-left:10px"><rect x="1" y="1" width="16.500" height="12" rx="3.200" fill="none" stroke="#fff" stroke-width="1.600"/><rect x="3.500" y="3.500" width="7.300" height="7" rx="1" fill="#fff"/><path d="M19.300 4.500V9.500" stroke="#fff" stroke-width="1.800" stroke-linecap="round"/></svg>
      <div class="text-end" style="width:79px;margin-left:18px;line-height:20px;padding-bottom:3px"><div style="letter-spacing:-.035em">15:36</div><div style="letter-spacing:-.015em">06/05/2025</div></div>
      <svg width="18" height="20" viewBox="0 0 18 20" style="margin-left:10px"><path d="M1 15.500 2.500 13V6.500Q3 1.200 8 1 15 1 15 6.500V13L16.500 15.500Z" fill="#fff"/><path d="M5.500 17H11.500Q10.500 19.500 8.500 19.500T5.500 17Z" fill="#fff"/><path d="M5.500 7.500H9.500L5.500 12H9.500" fill="none" stroke="#222" stroke-width="1.300"/><path d="M12 1.500H17L12 7H17" fill="none" stroke="#222" stroke-width="3"/><path d="M12.300 1.700H16.800L12.300 6.500H17" fill="none" stroke="#fff" stroke-width="1.200"/></svg>
    </div>
  </div>
</footer>
</body>
</html>
